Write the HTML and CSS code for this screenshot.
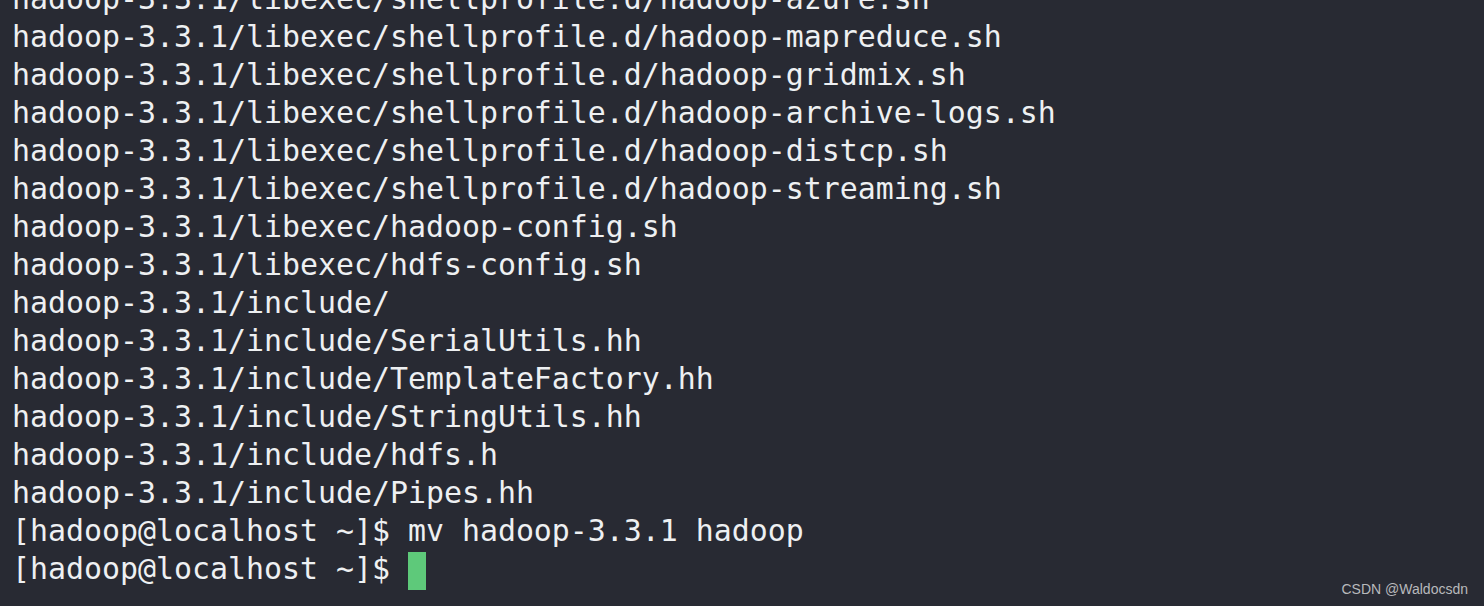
FILE: index.html
```html
<!DOCTYPE html>
<html>
<head>
<meta charset="utf-8">
<link rel="stylesheet" href="styles.css">
</head>
<body>
<div class="term">
<div class="line">hadoop-3.3.1/libexec/shellprofile.d/hadoop-azure.sh</div>
<div class="line">hadoop-3.3.1/libexec/shellprofile.d/hadoop-mapreduce.sh</div>
<div class="line">hadoop-3.3.1/libexec/shellprofile.d/hadoop-gridmix.sh</div>
<div class="line">hadoop-3.3.1/libexec/shellprofile.d/hadoop-archive-logs.sh</div>
<div class="line">hadoop-3.3.1/libexec/shellprofile.d/hadoop-distcp.sh</div>
<div class="line">hadoop-3.3.1/libexec/shellprofile.d/hadoop-streaming.sh</div>
<div class="line">hadoop-3.3.1/libexec/hadoop-config.sh</div>
<div class="line">hadoop-3.3.1/libexec/hdfs-config.sh</div>
<div class="line">hadoop-3.3.1/include/</div>
<div class="line">hadoop-3.3.1/include/SerialUtils.hh</div>
<div class="line">hadoop-3.3.1/include/TemplateFactory.hh</div>
<div class="line">hadoop-3.3.1/include/StringUtils.hh</div>
<div class="line">hadoop-3.3.1/include/hdfs.h</div>
<div class="line">hadoop-3.3.1/include/Pipes.hh</div>
<div class="line">[hadoop@localhost ~]$ mv hadoop-3.3.1 hadoop</div>
<div class="line">[hadoop@localhost ~]$ <span class="cursor"></span></div>
</div>
<div class="mark">CSDN @Waldocsdn</div>
</body>
</html>
```
FILE: styles.css
```css
html, body {
  margin: 0;
  padding: 0;
  background: #282a33;
  width: 1484px;
  height: 606px;
  overflow: hidden;
}
body {
  position: relative;
}
.term {
  margin-top: -18px;
  padding-left: 12px;
  font-family: "DejaVu Sans Mono", monospace;
  font-size: 29.9px;
  color: #eef0f2;
}
.line {
  height: 38px;
  line-height: 34px;
  white-space: pre;
}
.cursor {
  display: inline-block;
  width: 18px;
  height: 38px;
  background: #5ec97a;
  vertical-align: top;
}
.mark {
  position: absolute;
  right: 16px;
  bottom: 9px;
  font-family: "Liberation Sans", Arial, sans-serif;
  font-size: 14px;
  color: #b8b9bc;
}
```
